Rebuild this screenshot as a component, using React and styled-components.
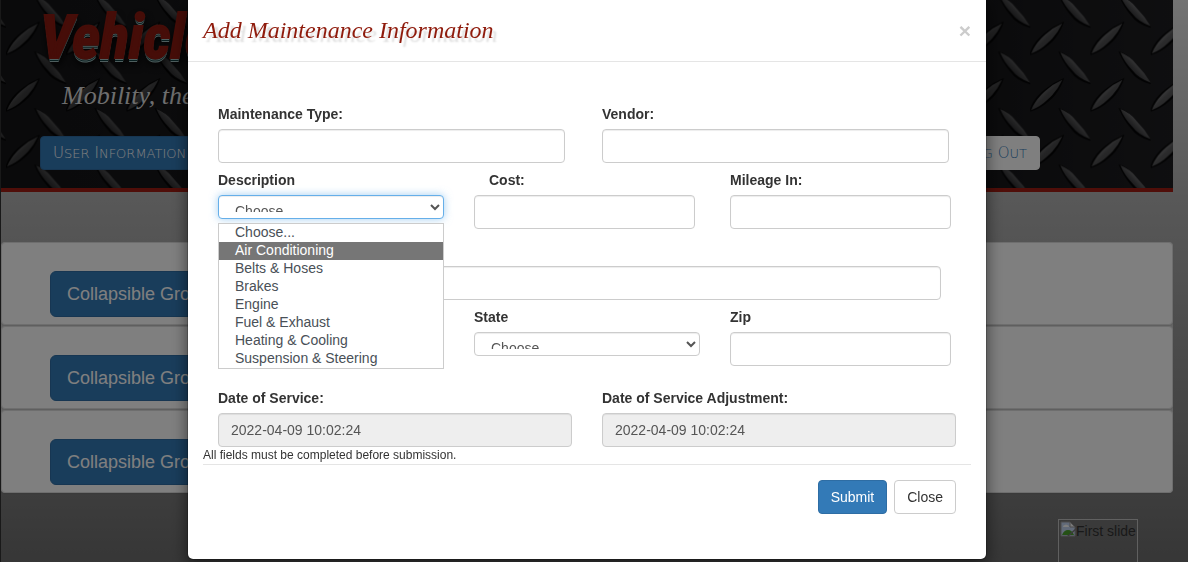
import React from "react";
import styled, { createGlobalStyle, css } from "styled-components";

const sans = `"Helvetica Neue", "Liberation Sans", Arial, sans-serif`;
const script = `"Liberation Serif", serif`;

const GlobalStyle = createGlobalStyle`
  *, *::before, *::after { box-sizing: border-box; }
  body {
    margin: 0;
    overflow: hidden;
    font-family: ${sans};
    font-size: 14px;
    line-height: 20px;
    color: #333;
  }
  h1, h4, p, ul { margin: 0; padding: 0; }
  button, input, select { font: inherit; color: inherit; }
`;

const Page = styled.div`
  min-height: 100vh;
  padding: 0 15px 0 1px;
  background:
    linear-gradient(#333, #333) left top / 1px 100% no-repeat,
    linear-gradient(to bottom, #e6e6e6 0, #b0b0b0 200px, #a4a4a4 270px, #6a6a6a 580px);
`;

const Banner = styled.header`
  display: grid;
  background: #161618;
  border-bottom: 4px solid #a01c12;
`;

const PlateArt = styled.svg`
  grid-area: 1 / 1;
  width: 100%;
  height: 0;
  min-height: 100%;
`;

const BannerContent = styled.div`
  grid-area: 1 / 1;
  z-index: 1;
  padding: 8px 0 18px 39px;
`;

const SiteName = styled.h1`
  font-family: Impact, "Roboto Condensed", "Open Sans Condensed", "Liberation Sans", sans-serif;
  font-size: 60px;
  line-height: 60px;
  font-weight: 700;
  font-style: italic;
  color: #8c1a10;
  -webkit-text-stroke: 2px #8c1a10;
  text-shadow: 0 1px 0 #0a2a2c, 0 2px 0 #9fbcbc, 0 3px 0 #0f3a3c, 0 4px 0 #9fbcbc, 1px 6px 8px #000;
`;

const Tagline = styled.p`
  padding: 12px 0 0 22px;
  font-family: ${script};
  font-size: 26px;
  line-height: 32px;
  font-style: italic;
  color: #ddd;
`;

const Nav = styled.nav`
  display: flex;
  justify-content: space-between;
  max-width: 1000px;
  margin-top: 24px;
`;

const NavLink = styled.a`
  display: flex;
  align-items: center;
  gap: 5px;
  height: 34px;
  padding: 0 12px;
  border: 1px solid ${(p) => (p.$active ? "#2e6da4" : "#fff")};
  border-radius: 4px;
  background: ${(p) => (p.$active ? "#337ab7" : "#fff")};
  color: ${(p) => (p.$active ? "#fff" : "#337ab7")};
  font-family: "DejaVu Sans Light", "DejaVu Sans", sans-serif;
  font-weight: 200;
  font-size: 13px;
  line-height: 20px;
  text-transform: uppercase;
  text-decoration: none;
  white-space: nowrap;
`;

const Word = styled.span`
  display: block;
  &::first-letter {
    font-size: 15px;
  }
`;

const Accordion = styled.main`
  display: grid;
  gap: 1px;
  margin-top: 50px;
  border-radius: 4px;
  background: #c8c8c8;
`;

const Panel = styled.section`
  padding: 28px 48px 7px;
  border: 1px solid #ddd;
  border-radius: 4px;
  background: #fff;
  box-shadow: 0 1px 1px rgba(0, 0, 0, 0.05);
`;

const PanelButton = styled.button`
  display: block;
  padding: 10px 16px;
  border: 1px solid #2e6da4;
  border-radius: 6px;
  background: #337ab7;
  color: #fff;
  font-size: 18px;
  line-height: 24px;
`;

const Slide = styled.div`
  display: flex;
  width: 80px;
  height: 60px;
  margin: 26px 35px 0 auto;
  padding: 1px;
  border: 1px solid #c0c0c0;
  white-space: nowrap;
  line-height: 20px;
`;

const SlideIcon = styled.svg`
  flex: none;
  width: 16px;
  height: 16px;
`;

const Backdrop = styled.div`
  position: fixed;
  z-index: 10;
  inset: 0;
  padding-right: 14px;
  background: rgba(0, 0, 0, 0.5);
`;

const Dialog = styled.div`
  max-width: 800px;
  margin: 0 auto;
  border: 1px solid rgba(0, 0, 0, 0.2);
  border-top: 0;
  border-radius: 0 0 6px 6px;
  background: #fff;
  background-clip: padding-box;
  box-shadow: 0 5px 15px rgba(0, 0, 0, 0.5);
`;

const DialogHeader = styled.div`
  display: flex;
  justify-content: space-between;
  align-items: center;
  padding: 15px;
  border-bottom: 1px solid #e5e5e5;
`;

const DialogTitle = styled.h4`
  font-family: ${script};
  font-size: 24px;
  line-height: 31px;
  font-style: italic;
  font-weight: 400;
  color: #8f1b0c;
  text-shadow: 4px 4px 2px #ddd;
`;

const CloseIcon = styled.button`
  padding: 0;
  border: 0;
  background: none;
  color: #ccc;
  font-size: 21px;
  line-height: 21px;
  font-weight: 700;
`;

const Form = styled.form`
  padding: 42px 15px 45px;
`;

const Row = styled.div`
  display: grid;
  grid-template-columns: repeat(${(p) => p.$cols}, 1fr);
  margin-bottom: ${(p) => p.$after || 0}px;
`;

const Cell = styled.div`
  position: relative;
  min-width: 0;
  padding: 0 15px;
`;

const Label = styled.label`
  display: block;
  min-height: 20px;
  margin-bottom: 5px;
  padding-left: ${(p) => (p.$indent ? "15px" : "0")};
  font-weight: 700;
`;

const control = css`
  display: block;
  border: 1px solid #ccc;
  border-radius: 4px;
  background: #fff;
  color: #555;
  box-shadow: inset 0 1px 1px rgba(0, 0, 0, 0.075);
  outline: 0;
`;

const Input = styled.input`
  ${control}
  width: 98%;
  height: 34px;
  padding: 6px 12px;
  &:read-only {
    width: 100%;
    background: #eee;
  }
`;

const Select = styled.select`
  ${control}
  width: 100%;
  height: 24px;
  padding: 6px 12px;
  ${(p) =>
    p.$focused &&
    css`
      border-color: #66afe9;
      box-shadow: inset 0 1px 1px rgba(0, 0, 0, 0.075), 0 0 8px rgba(102, 175, 233, 0.6);
    `}
`;

const Options = styled.ul`
  position: absolute;
  z-index: 2;
  top: 100%;
  left: 15px;
  right: 15px;
  margin-top: -6px;
  border: 1px solid #ccc;
  background: #fff;
  color: #495057;
  list-style: none;
`;

const Option = styled.li`
  padding: 0 16px 2px;
  line-height: 16px;
  ${(p) =>
    p.$active &&
    css`
      background: #767676;
      color: #fff;
    `}
`;

const Note = styled.p`
  font-size: 12px;
  line-height: 17px;
`;

const Actions = styled.div`
  display: flex;
  justify-content: flex-end;
  gap: 7px;
  padding: 15px 15px 0;
  border-top: 1px solid #e5e5e5;
`;

const Button = styled.button`
  padding: 6px 12px;
  border: 1px solid ${(p) => (p.$primary ? "#2e6da4" : "#ccc")};
  border-radius: 4px;
  background: ${(p) => (p.$primary ? "#337ab7" : "#fff")};
  color: ${(p) => (p.$primary ? "#fff" : "#333")};
  line-height: 20px;
`;

const descriptions = [
  "Choose...",
  "Air Conditioning",
  "Belts & Hoses",
  "Brakes",
  "Engine",
  "Fuel & Exhaust",
  "Heating & Cooling",
  "Suspension & Steering",
];

const timestamp = "2022-04-09 10:02:24";

function DiamondPlate() {
  return (
    <PlateArt aria-hidden="true">
      <defs>
        <linearGradient id="falling" x1="0" y1="1" x2="1" y2="0">
          <stop offset="0.35" stopColor="#343438" />
          <stop offset="0.5" stopColor="#5a5a5c" />
          <stop offset="0.65" stopColor="#8a8a8c" />
        </linearGradient>
        <linearGradient id="rising" x1="0" y1="0" x2="1" y2="1">
          <stop offset="0.4" stopColor="#78787a" />
          <stop offset="0.5" stopColor="#5c5c5e" />
          <stop offset="0.7" stopColor="#505052" />
        </linearGradient>
        <linearGradient id="shade" x1="0" y1="0" x2="1" y2="0">
          <stop offset="0" stopColor="#000" stopOpacity="0.35" />
          <stop offset="0.2" stopColor="#000" stopOpacity="0.25" />
          <stop offset="0.8" stopColor="#000" stopOpacity="0.35" />
          <stop offset="1" stopColor="#000" stopOpacity="0.05" />
        </linearGradient>
        <pattern id="plate" width="60.25" height="56.5" patternUnits="userSpaceOnUse" patternTransform="translate(5 -18)">
          <rect width="61" height="57" fill="#1f1f22" />
          <path d="M28 13 Q38 15 44 25 Q54 34 61 46 Q47 43 40 33 Q33 25 28 13Z" fill="#050506" />
          <path d="M30 14 Q40 18 46 26 Q54 34 60 44 Q48 40 42 32 Q34 24 30 14Z" fill="url(#falling)" />
          <g id="lug">
            <path d="M-1 17 Q2 4 15 -6 Q24 -13 34 -17 Q29 -2 19 6 Q10 14 -1 17Z" fill="#050506" />
            <path d="M1 15 Q5 5 15 -4 Q23 -11 32 -15 Q27 -4 18 4 Q10 12 1 15Z" fill="url(#rising)" />
          </g>
          <use href="#lug" y="56.5" />
        </pattern>
      </defs>
      <rect width="100%" height="100%" fill="url(#plate)" />
      <rect width="100%" height="100%" fill="url(#shade)" />
    </PlateArt>
  );
}

function TextField({ id, label, indent, bare, ...rest }) {
  return (
    <Cell>
      <Label htmlFor={id} $indent={indent}>{bare ? null : label}</Label>
      <Input id={id} type="text" aria-label={bare ? label : undefined} {...rest} />
    </Cell>
  );
}

export default function App() {
  return (
    <>
      <GlobalStyle />
      <Page>
        <Banner>
          <DiamondPlate />
          <BannerContent>
            <SiteName>Vehicle</SiteName>
            <Tagline>Mobility, the</Tagline>
            <Nav>
              <NavLink href="#user" $active>
                <Word>User</Word>
                <Word>Information</Word>
              </NavLink>
              <NavLink href="#logout">
                <Word>Log</Word>
                <Word>Out</Word>
              </NavLink>
            </Nav>
          </BannerContent>
        </Banner>
        <Accordion>
          {[1, 2, 3].map((n) => (
            <Panel key={n}>
              <PanelButton type="button">Collapsible Group</PanelButton>
            </Panel>
          ))}
        </Accordion>
        <Slide>
          <SlideIcon viewBox="0 0 16 16" aria-hidden="true">
            <path d="M1 1h9l5 5v9H1z" fill="#c3d4f2" stroke="#9a9a9a" />
            <path d="M10 1v5h5z" fill="#f4f4f4" stroke="#9a9a9a" />
            <path d="M3 6q0-2 2-2 1-1 2 0 2 0 2 2z" fill="#fff" />
            <path d="M2 14q2-5 6-5 4 0 6 5z" fill="#4aa02c" />
            <path d="M9 15l7-6v-2l-9 8z" fill="#777" />
          </SlideIcon>
          First slide
        </Slide>
      </Page>
      <Backdrop>
        <Dialog role="dialog" aria-modal="true" aria-labelledby="dialog-title">
          <DialogHeader>
            <DialogTitle id="dialog-title">Add Maintenance Information</DialogTitle>
            <CloseIcon type="button" aria-label="Close">×</CloseIcon>
          </DialogHeader>
          <Form>
            <Row $cols={2} $after={7}>
              <TextField id="type" label="Maintenance Type:" />
              <TextField id="vendor" label="Vendor:" />
            </Row>
            <Row $cols={3} $after={12}>
              <Cell>
                <Label htmlFor="description">Description</Label>
                <Select id="description" $focused defaultValue="Choose...">
                  {descriptions.map((d) => (
                    <option key={d}>{d}</option>
                  ))}
                </Select>
                <Options role="listbox" aria-label="Description">
                  {descriptions.map((d, i) => (
                    <Option key={d} role="option" aria-selected={i === 1} $active={i === 1}>{d}</Option>
                  ))}
                </Options>
              </Cell>
              <TextField id="cost" label="Cost:" indent />
              <TextField id="mileage" label="Mileage In:" />
            </Row>
            <Row $cols={1} $after={7}>
              <TextField id="address" label="Address" bare />
            </Row>
            <Row $cols={3} $after={22}>
              <TextField id="city" label="City" bare />
              <Cell>
                <Label htmlFor="state">State</Label>
                <Select id="state">
                  <option>Choose...</option>
                </Select>
              </Cell>
              <TextField id="zip" label="Zip" />
            </Row>
            <Row $cols={2}>
              <TextField id="service" label="Date of Service:" value={timestamp} readOnly />
              <TextField id="adjustment" label="Date of Service Adjustment:" value={timestamp} readOnly />
            </Row>
            <Note>All fields must be completed before submission.</Note>
            <Actions>
              <Button type="button" $primary>Submit</Button>
              <Button type="button">Close</Button>
            </Actions>
          </Form>
        </Dialog>
      </Backdrop>
    </>
  );
}
